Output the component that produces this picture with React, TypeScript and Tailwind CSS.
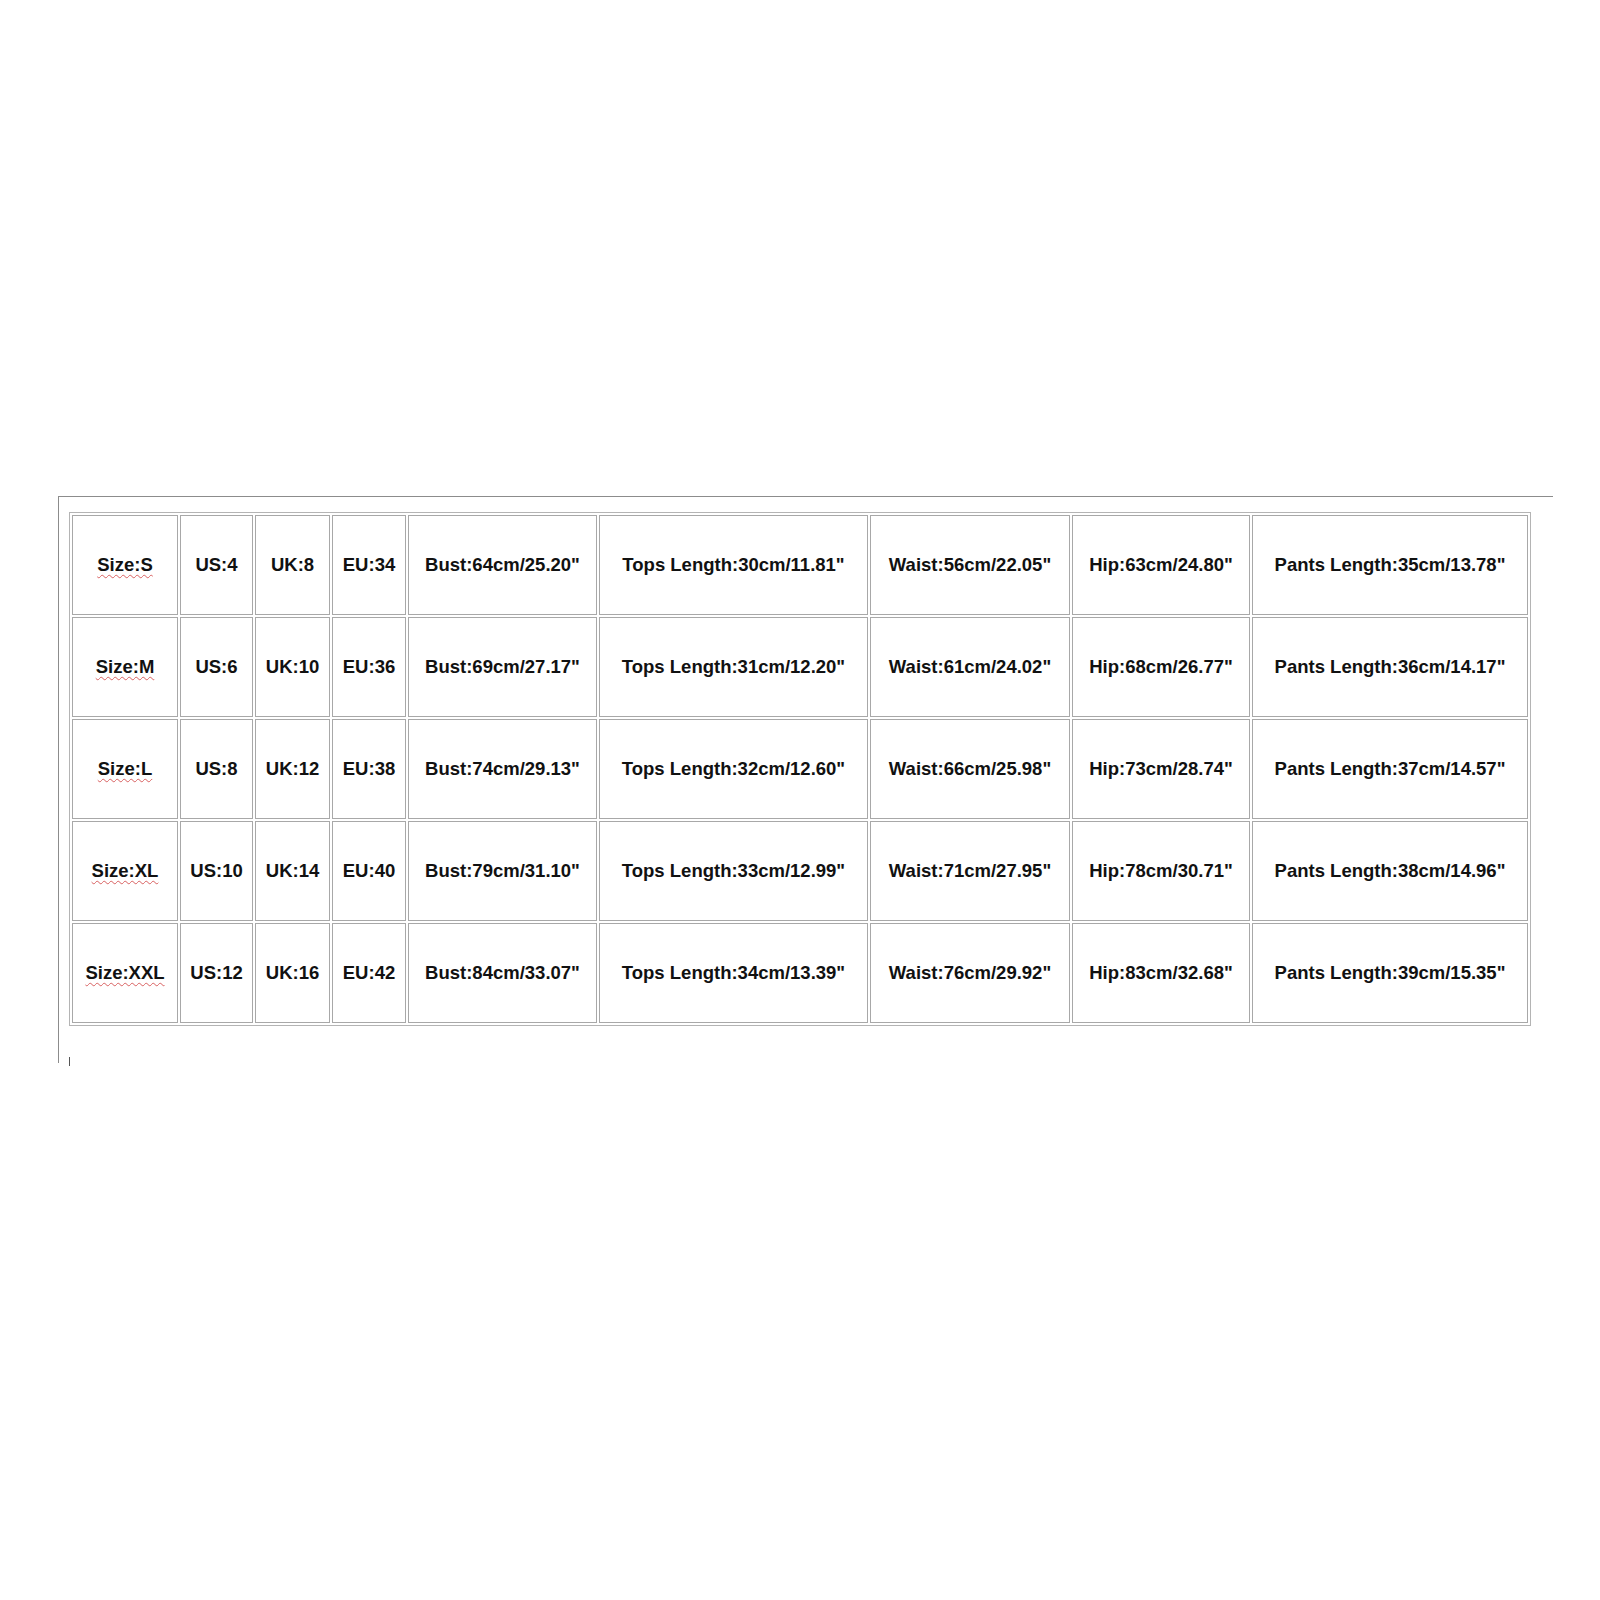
import React from "react";

const widths = [
  "w-[106px]",
  "w-[73px]",
  "w-[75px]",
  "w-[74px]",
  "w-[189px]",
  "w-[269px]",
  "w-[200px]",
  "w-[178px]",
  "w-[276px]",
];

const rows = [
  ["Size:S", "US:4", "UK:8", "EU:34", 'Bust:64cm/25.20"', 'Tops Length:30cm/11.81"', 'Waist:56cm/22.05"', 'Hip:63cm/24.80"', 'Pants Length:35cm/13.78"'],
  ["Size:M", "US:6", "UK:10", "EU:36", 'Bust:69cm/27.17"', 'Tops Length:31cm/12.20"', 'Waist:61cm/24.02"', 'Hip:68cm/26.77"', 'Pants Length:36cm/14.17"'],
  ["Size:L", "US:8", "UK:12", "EU:38", 'Bust:74cm/29.13"', 'Tops Length:32cm/12.60"', 'Waist:66cm/25.98"', 'Hip:73cm/28.74"', 'Pants Length:37cm/14.57"'],
  ["Size:XL", "US:10", "UK:14", "EU:40", 'Bust:79cm/31.10"', 'Tops Length:33cm/12.99"', 'Waist:71cm/27.95"', 'Hip:78cm/30.71"', 'Pants Length:38cm/14.96"'],
  ["Size:XXL", "US:12", "UK:16", "EU:42", 'Bust:84cm/33.07"', 'Tops Length:34cm/13.39"', 'Waist:76cm/29.92"', 'Hip:83cm/32.68"', 'Pants Length:39cm/15.35"'],
];

const App: React.FC = () => {
  return (
    <div
      className="w-[1600px] h-[1600px] bg-white pt-[496px] pl-[58px]"
      style={{ fontFamily: '"Liberation Sans", Arial, sans-serif' }}
    >
      {/* Document frame */}
      <div className="w-[1495px] h-[567px] border-t border-l border-[#8c8c8c] pl-[10px] pt-[15px]">
        <table className="border-separate border-spacing-[2px] border border-[#b4b4b4] text-[18.5px] font-bold text-[#111111]">
          <tbody>
            {rows.map((row, r) => (
              <tr key={r}>
                {row.map((cell, c) => (
                  <td
                    key={c}
                    className={`${widths[c]} h-[100px] p-0 border border-[#a8a8a8] text-center align-middle`}
                  >
                    {c === 0 ? (
                      <span className="underline decoration-wavy decoration-[#d86060] decoration-1 underline-offset-[3px]">
                        {cell}
                      </span>
                    ) : (
                      cell
                    )}
                  </td>
                ))}
              </tr>
            ))}
          </tbody>
        </table>
        {/* text cursor */}
        <div className="mt-[31px] w-px h-[9px] bg-[#555555]" />
      </div>
    </div>
  );
};

export default App;
